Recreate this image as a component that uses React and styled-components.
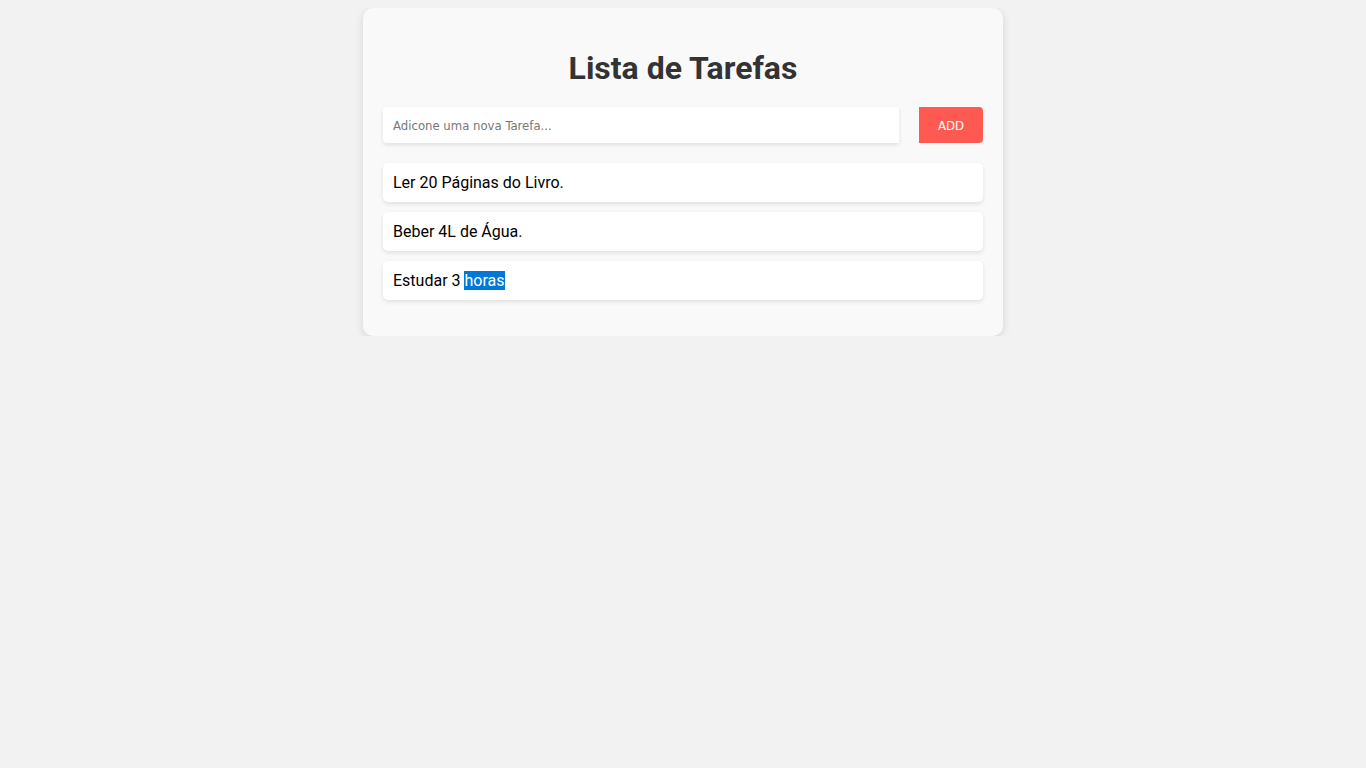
import React, { useState } from "react";
import styled, { createGlobalStyle } from "styled-components";

const GlobalStyle = createGlobalStyle`
  body {
    margin: 8px;
    background-color: #f2f2f2;
    font-family: Roboto, "Liberation Sans", sans-serif;
  }
`;

const Card = styled.div`
  width: 600px;
  margin: 0 auto;
  padding: 20px 20px 36px;
  background-color: #f9f9f9;
  border-radius: 10px;
  box-shadow: 0 2px 8px rgba(0, 0, 0, 0.12);
`;

const Title = styled.h1`
  margin: 21px 0 20px;
  text-align: center;
  font-size: 32px;
  font-weight: 700;
  color: #333;
`;

const Form = styled.form`
  display: flex;
  gap: 20px;
  margin-bottom: 20px;
`;

const Input = styled.input`
  flex: 1;
  height: 36px;
  box-sizing: border-box;
  padding: 0 10px;
  border: none;
  border-radius: 4px 0 0 4px;
  background-color: #fff;
  box-shadow: 0 2px 4px rgba(0, 0, 0, 0.1);
  font-family: "DejaVu Sans Condensed", "DejaVu Sans", sans-serif;
  font-stretch: condensed;
  font-size: 13px;
  color: #333;

  &::placeholder {
    color: #777;
  }

  &:focus {
    outline: none;
  }
`;

const AddButton = styled.button`
  width: 64px;
  height: 36px;
  border: none;
  border-radius: 0 4px 4px 0;
  background-color: #ff5a52;
  color: #fff;
  font-family: "DejaVu Sans Condensed", "DejaVu Sans", sans-serif;
  font-stretch: condensed;
  font-size: 13px;
  cursor: pointer;
`;

const List = styled.ul`
  list-style: none;
  margin: 0;
  padding: 0;
  display: flex;
  flex-direction: column;
  gap: 10px;
`;

const Item = styled.li`
  padding: 10px;
  background-color: #fff;
  border-radius: 5px;
  box-shadow: 0 2px 4px rgba(0, 0, 0, 0.1);
  font-size: 16px;
  color: #000;
`;

const Selected = styled.span`
  background-color: #0078d7;
  color: #fff;
`;

export default function App() {
  const [tasks, setTasks] = useState([
    "Ler 20 Páginas do Livro.",
    "Beber 4L de Água.",
    "Estudar 3 horas",
  ]);
  const [text, setText] = useState("");

  const handleSubmit = (e) => {
    e.preventDefault();
    if (!text.trim()) return;
    setTasks([...tasks, text]);
    setText("");
  };

  return (
    <>
      <GlobalStyle />
      <Card>
        <Title>Lista de Tarefas</Title>
        <Form onSubmit={handleSubmit}>
          <Input
            placeholder="Adicone uma nova Tarefa..."
            value={text}
            onChange={(e) => setText(e.target.value)}
          />
          <AddButton type="submit">ADD</AddButton>
        </Form>
        <List>
          {tasks.map((task, i) =>
            task === "Estudar 3 horas" ? (
              <Item key={i}>
                Estudar 3 <Selected>horas</Selected>
              </Item>
            ) : (
              <Item key={i}>{task}</Item>
            )
          )}
        </List>
      </Card>
    </>
  );
}
